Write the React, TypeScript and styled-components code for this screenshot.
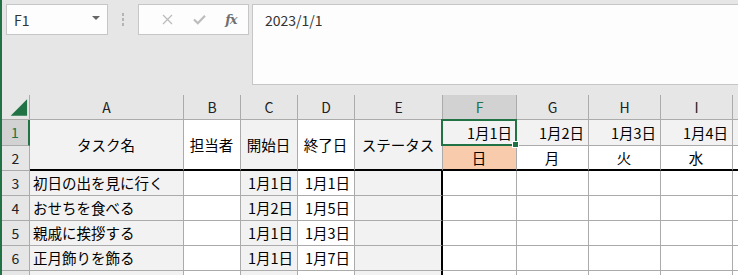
import React from "react";
import styled, { createGlobalStyle, css } from "styled-components";

const GlobalStyle = createGlobalStyle`
  html, body { margin: 0; padding: 0; background: #e6e6e6; overflow: hidden; }
  body { width: 738px; height: 275px; }
  * { box-sizing: border-box; }
`;

const FONT = `"Noto Sans CJK JP", "Noto Sans", sans-serif`;
const GREEN = "#217346";
const LINE = "#ababab";

const Window = styled.div`
  width: 738px;
  height: 275px;
  border-left: 2px solid ${GREEN};
  background: #e6e6e6;
  display: flex;
  flex-direction: column;
  overflow: hidden;
  font-family: ${FONT};
`;

const FormulaArea = styled.div`
  height: 95px;
  flex-shrink: 0;
  display: flex;
  align-items: flex-start;
  padding: 4px 0 0 4px;
`;

const NameBox = styled.div`
  width: 102px;
  height: 31px;
  background: #fdfdfd;
  border: 1px solid #c6c6c6;
  display: flex;
  align-items: center;
  justify-content: space-between;
  padding: 0 7px 0 7px;
  font-size: 14px;
  color: #333;
`;

const DropArrow = styled.span`
  width: 0;
  height: 0;
  border-left: 4px solid transparent;
  border-right: 4px solid transparent;
  border-top: 4px solid #666;
  margin-top: -3px;
`;

const Grip = styled.div`
  width: 30px;
  height: 31px;
  display: flex;
  flex-direction: column;
  align-items: center;
  justify-content: center;
  gap: 2px;
  & > span {
    width: 2px;
    height: 3px;
    background: #b4b4b4;
  }
`;

const ButtonBox = styled.div`
  width: 111px;
  height: 31px;
  background: #fdfdfd;
  border: 1px solid #c6c6c6;
  display: flex;
  align-items: center;
  padding: 0 0 0 12px;
`;

const IconSlot = styled.span`
  width: 36px;
  height: 20px;
  display: flex;
  align-items: center;
  justify-content: center;
`;

const Fx = styled.span`
  font-family: "DejaVu Serif", "Liberation Serif", serif;
  font-style: italic;
  font-weight: bold;
  font-size: 13px;
  color: #707070;
  letter-spacing: -1px;
  margin-left: -2px;
`;

const FormulaBar = styled.div`
  flex: 1;
  height: 81px;
  margin-left: 3px;
  background: #fdfdfd;
  border: 1px solid #c6c6c6;
  border-right: none;
  padding: 6px 0 0 12px;
  font-size: 14px;
  color: #333;
  line-height: 18px;
`;

const Sheet = styled.div`
  flex-shrink: 0;
  display: grid;
  grid-template-columns: 28px 154px 57px 57px 57px 88px 74px 72px 72px 72px 1fr;
  grid-template-rows: 25px 26px 25px 25px 25px 25px 25px 25px;
  font-size: 14.5px;
  color: #000;
`;

type Fill = "head" | "headSel" | "gray" | "white" | "orange";

const fills: Record<Fill, string> = {
  head: "#e6e6e6",
  headSel: "#d2d2d2",
  gray: "#f2f2f2",
  white: "#ffffff",
  orange: "#f8cbad",
};

const Cell = styled.div<{
  $fill: Fill;
  $align?: "left" | "center" | "right";
  $rows?: number;
  $thickBottom?: boolean;
  $thickRight?: boolean;
  $selRowHead?: boolean;
}>`
  position: relative;
  background: ${(p) => fills[p.$fill]};
  border-right: 1px solid ${LINE};
  border-bottom: 1px solid ${LINE};
  display: flex;
  align-items: center;
  justify-content: ${(p) =>
    p.$align === "left" ? "flex-start" : p.$align === "right" ? "flex-end" : "center"};
  padding: 0 4px 1px 3px;
  white-space: nowrap;
  overflow: visible;
  ${(p) => p.$rows && css`grid-row: span ${p.$rows};`}
  ${(p) => p.$thickBottom && css`border-bottom: 2px solid #000;`}
  ${(p) => p.$thickRight && css`border-right: 2px solid #000;`}
  ${(p) =>
    (p.$fill === "head" || p.$fill === "headSel") &&
    css`
      color: ${p.$fill === "headSel" ? GREEN : "#222"};
      font-size: 14px;
      padding: 0 0 1px 0;
    `}
  ${(p) => p.$selRowHead && css`border-right: 2px solid ${GREEN};`}
`;

const Selection = styled.div`
  position: absolute;
  top: -1px;
  left: -2px;
  right: -1px;
  bottom: -1px;
  border: 2px solid ${GREEN};
  pointer-events: none;
  z-index: 2;
`;

const Handle = styled.div`
  position: absolute;
  right: -4px;
  bottom: -4px;
  width: 7px;
  height: 7px;
  background: ${GREEN};
  border: 1px solid #fff;
`;

const CornerTriangle = () => (
  <svg width="28" height="25" viewBox="0 0 28 25">
    <polygon points="9,22 26,22 26,5" fill={GREEN} />
  </svg>
);

const columns = ["A", "B", "C", "D", "E", "F", "G", "H", "I", ""];

type Task = { name: string; start: string; end: string };
const tasks: Task[] = [
  { name: "初日の出を見に行く", start: "1月1日", end: "1月1日" },
  { name: "おせちを食べる", start: "1月2日", end: "1月5日" },
  { name: "親戚に挨拶する", start: "1月1日", end: "1月3日" },
  { name: "正月飾りを飾る", start: "1月1日", end: "1月7日" },
  { name: "", start: "", end: "" },
];

const dates = ["1月1日", "1月2日", "1月3日", "1月4日"];
const weekdays = ["日", "月", "火", "水"];

export default function App() {
  return (
    <>
      <GlobalStyle />
      <Window>
        <FormulaArea>
          <NameBox>
            <span>F1</span>
            <DropArrow />
          </NameBox>
          <Grip>
            <span />
            <span />
            <span />
          </Grip>
          <ButtonBox>
            <IconSlot>
              <svg width="11" height="11" viewBox="0 0 11 11">
                <path d="M1 1 L10 10 M10 1 L1 10" stroke="#bcbcbc" strokeWidth="1.3" fill="none" />
              </svg>
            </IconSlot>
            <IconSlot>
              <svg width="13" height="11" viewBox="0 0 13 11">
                <path d="M1 5.5 L4.8 9.3 L12 1.8" stroke="#bcbcbc" strokeWidth="2.2" fill="none" />
              </svg>
            </IconSlot>
            <IconSlot>
              <Fx>fx</Fx>
            </IconSlot>
          </ButtonBox>
          <FormulaBar>2023/1/1</FormulaBar>
        </FormulaArea>

        <Sheet>
          <Cell $fill="head">
            <CornerTriangle />
          </Cell>
          {columns.map((c, i) => (
            <Cell key={"h" + i} $fill={c === "F" ? "headSel" : "head"}>
              {c}
            </Cell>
          ))}

          <Cell $fill="headSel" $selRowHead>
            1
          </Cell>
          <Cell $fill="gray" $rows={2} $thickBottom>
            タスク名
          </Cell>
          <Cell $fill="white" $rows={2} $thickBottom>
            担当者
          </Cell>
          <Cell $fill="gray" $rows={2} $thickBottom>
            開始日
          </Cell>
          <Cell $fill="white" $rows={2} $thickBottom>
            終了日
          </Cell>
          <Cell $fill="gray" $rows={2} $thickBottom>
            ステータス
          </Cell>
          {dates.map((d, i) => (
            <Cell key={"d" + i} $fill="gray" $align="right">
              {d}
              {i === 0 && (
                <Selection>
                  <Handle />
                </Selection>
              )}
            </Cell>
          ))}
          <Cell $fill="gray" />

          <Cell $fill="head">2</Cell>
          {weekdays.map((w, i) => (
            <Cell key={"w" + i} $fill={i === 0 ? "orange" : "white"} $thickBottom>
              {w}
            </Cell>
          ))}
          <Cell $fill="white" $thickBottom />

          {tasks.map((t, r) => (
            <React.Fragment key={"r" + r}>
              <Cell $fill="head">{t.name ? r + 3 : ""}</Cell>
              <Cell $fill="gray" $align="left">
                {t.name}
              </Cell>
              <Cell $fill="white" />
              <Cell $fill="gray" $align="right">
                {t.start}
              </Cell>
              <Cell $fill="white" $align="right">
                {t.end}
              </Cell>
              <Cell $fill="gray" $thickRight />
              <Cell $fill="white" />
              <Cell $fill="white" />
              <Cell $fill="white" />
              <Cell $fill="white" />
              <Cell $fill="white" />
            </React.Fragment>
          ))}
        </Sheet>
      </Window>
    </>
  );
}
